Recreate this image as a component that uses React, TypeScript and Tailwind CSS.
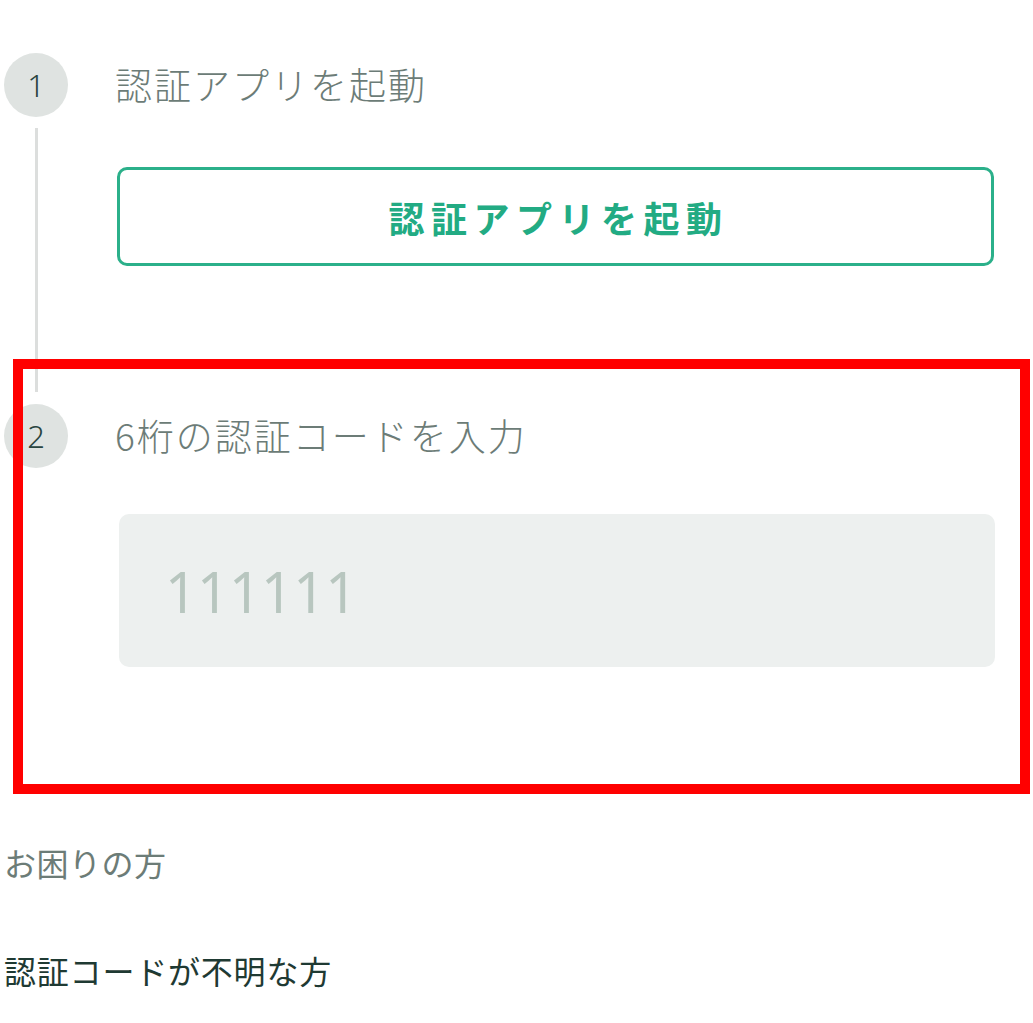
import React from "react";

const jp = { fontFamily: '"Noto Sans CJK JP", "Noto Sans", sans-serif' };

export default function App() {
  return (
    <div className="relative w-[1033px] h-[1023px] bg-white overflow-hidden" style={jp}>
      <div className="pt-[53px] pl-[4px] pr-[38px]">
        {/* Step 1 */}
        <div className="flex gap-[47px]">
          <div className="flex flex-col items-center w-[64px] shrink-0">
            <div className="w-[64px] h-[64px] rounded-full bg-[#dfe3e1] flex items-center justify-center text-[31px] font-light text-[#2a4540]" style={{ fontFamily: '"Noto Sans", sans-serif' }}>
              1
            </div>
            <div className="w-[3px] flex-1 bg-[#dcdedd] mt-[11px] mb-[12px]" />
          </div>
          <div className="flex-1 pb-[138px]">
            <div className="h-[64px] flex items-center text-[37px] font-light tracking-[2px] text-[#6c7c77]">
              認証アプリを起動
            </div>
            <button className="mt-[50px] ml-[2px] w-[877px] h-[99px] rounded-[10px] border-[3px] border-[#2bb08a] bg-white flex items-center justify-center text-[36px] font-bold tracking-[6.5px] pl-[6px] text-[#22ab83]">
              認証アプリを起動
            </button>
          </div>
        </div>
        {/* Step 2 */}
        <div className="flex gap-[47px]">
          <div className="flex flex-col items-center w-[64px] shrink-0">
            <div className="w-[64px] h-[64px] rounded-full bg-[#dfe3e1] flex items-center justify-center text-[31px] font-light text-[#2a4540]" style={{ fontFamily: '"Noto Sans", sans-serif' }}>
              2
            </div>
          </div>
          <div className="flex-1">
            <div className="h-[64px] flex items-center text-[37px] font-light tracking-[2px] text-[#6c7c77]">
              6桁の認証コードを入力
            </div>
            <div className="mt-[46px] ml-[4px] w-[876px] h-[153px] rounded-[10px] bg-[#edf0ef] flex items-center pl-[46px]">
              <span className="text-[56px] text-[#b8c6bf]" style={{ fontFamily: '"Noto Sans", sans-serif' }}>111111</span>
            </div>
          </div>
        </div>
      </div>

      <div className="pl-[4px] mt-[175px] text-[32px] tracking-[0.5px] text-[#6c7c77] leading-[40px]">
        お困りの方
      </div>
      <div className="pl-[4px] mt-[68px] text-[32px] tracking-[0.8px] text-[#1f3a33] leading-[40px]">
        認証コードが不明な方
      </div>

      {/* annotation overlay */}
      <div className="absolute left-[13px] top-[359px] w-[1017px] h-[435px] border-[10px] border-[#ff0000] pointer-events-none" />
    </div>
  );
}
